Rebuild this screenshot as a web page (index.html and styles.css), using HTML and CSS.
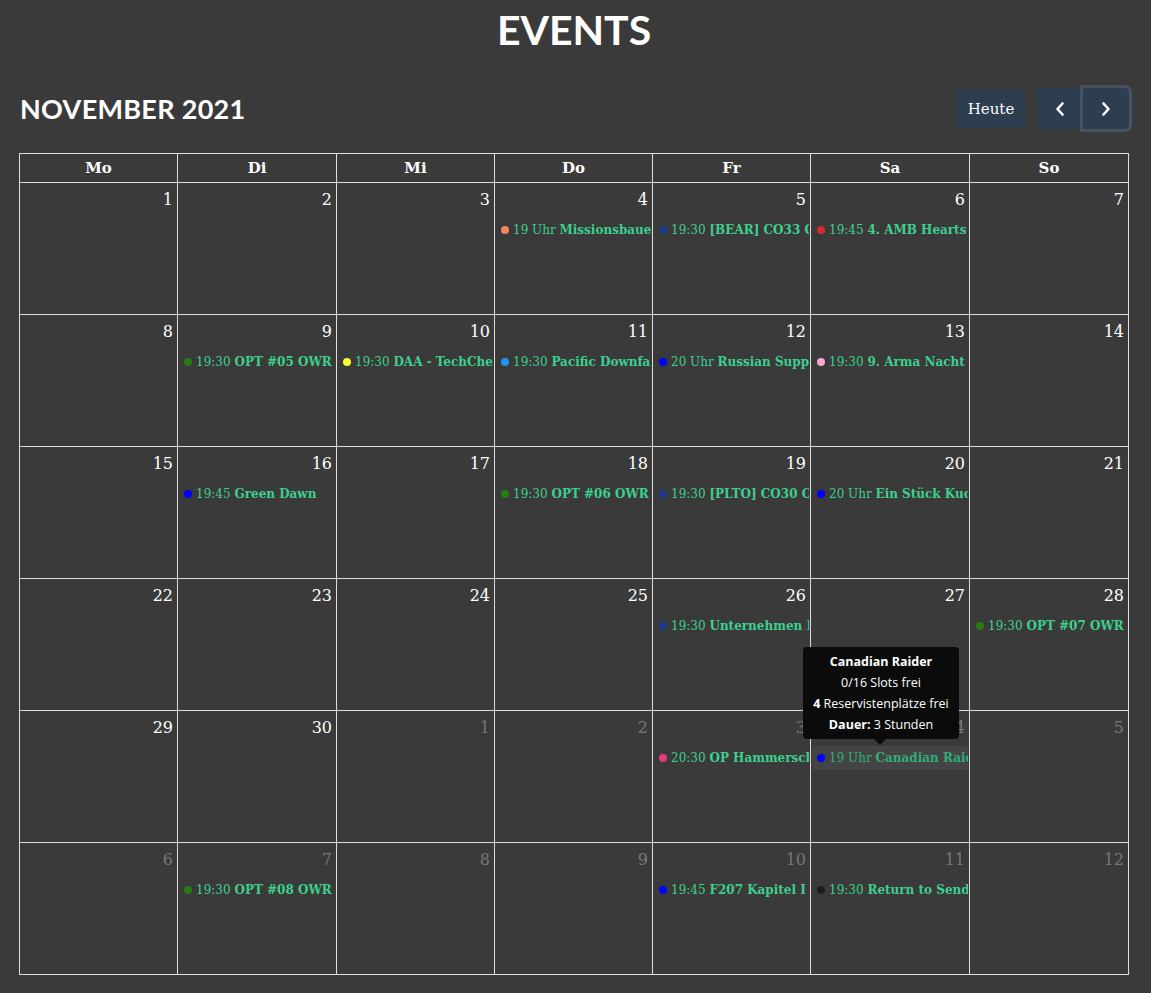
FILE: index.html
```html
<!DOCTYPE html>
<html lang="de">
<head>
<meta charset="utf-8">
<title>Events</title>
<link rel="stylesheet" href="styles.css">
</head>
<body>
<div class="page">
  <h1 class="page-title">EVENTS</h1>
  <div class="toolbar">
    <h2 class="month-title">NOVEMBER 2021</h2>
    <div class="actions">
      <button class="btn btn-today">Heute</button>
      <div class="btn-group">
        <button class="btn btn-nav" aria-label="Zurück"><svg width="12" height="16" viewBox="0 0 12 16"><polyline points="8.5,2.5 3.5,8 8.5,13.5" fill="none" stroke="#fff" stroke-width="2.6" stroke-linecap="round" stroke-linejoin="round"/></svg></button>
        <button class="btn btn-nav focused" aria-label="Weiter"><svg width="12" height="16" viewBox="0 0 12 16"><polyline points="3.5,2.5 8.5,8 3.5,13.5" fill="none" stroke="#fff" stroke-width="2.6" stroke-linecap="round" stroke-linejoin="round"/></svg></button>
      </div>
    </div>
  </div>

  <div class="calendar">
    <div class="head">Mo</div><div class="head">Di</div><div class="head">Mi</div><div class="head">Do</div><div class="head">Fr</div><div class="head">Sa</div><div class="head">So</div>

    <div class="day"><div class="num">1</div></div>
    <div class="day"><div class="num">2</div></div>
    <div class="day"><div class="num">3</div></div>
    <div class="day"><div class="num">4</div><div class="event"><div class="ev-line"><span class="dot c-coral"></span><span class="time">19 Uhr</span> <b>Missionsbauer Abend</b></div></div></div>
    <div class="day"><div class="num">5</div><div class="event"><div class="ev-line"><span class="dot c-navy"></span><span class="time">19:30</span> <b>[BEAR] CO33 Operation</b></div></div></div>
    <div class="day"><div class="num">6</div><div class="event"><div class="ev-line"><span class="dot c-red"></span><span class="time">19:45</span> <b>4. AMB Hearts of Iron</b></div></div></div>
    <div class="day"><div class="num">7</div></div>

    <div class="day"><div class="num">8</div></div>
    <div class="day"><div class="num">9</div><div class="event"><div class="ev-line"><span class="dot c-green"></span><span class="time">19:30</span> <b>OPT #05 OWR</b></div></div></div>
    <div class="day"><div class="num">10</div><div class="event"><div class="ev-line"><span class="dot c-yellow"></span><span class="time">19:30</span> <b>DAA - TechCheck</b></div></div></div>
    <div class="day"><div class="num">11</div><div class="event"><div class="ev-line"><span class="dot c-sky"></span><span class="time">19:30</span> <b>Pacific Downfall</b></div></div></div>
    <div class="day"><div class="num">12</div><div class="event"><div class="ev-line"><span class="dot c-blue"></span><span class="time">20 Uhr</span> <b>Russian Suppression</b></div></div></div>
    <div class="day"><div class="num">13</div><div class="event"><div class="ev-line"><span class="dot c-pink"></span><span class="time">19:30</span> <b>9. Arma Nacht - Special</b></div></div></div>
    <div class="day"><div class="num">14</div></div>

    <div class="day"><div class="num">15</div></div>
    <div class="day"><div class="num">16</div><div class="event"><div class="ev-line"><span class="dot c-blue"></span><span class="time">19:45</span> <b>Green Dawn</b></div></div></div>
    <div class="day"><div class="num">17</div></div>
    <div class="day"><div class="num">18</div><div class="event"><div class="ev-line"><span class="dot c-green"></span><span class="time">19:30</span> <b>OPT #06 OWR</b></div></div></div>
    <div class="day"><div class="num">19</div><div class="event"><div class="ev-line"><span class="dot c-navy"></span><span class="time">19:30</span> <b>[PLTO] CO30 Operation</b></div></div></div>
    <div class="day"><div class="num">20</div><div class="event"><div class="ev-line"><span class="dot c-blue"></span><span class="time">20 Uhr</span> <b>Ein Stück Kuchen</b></div></div></div>
    <div class="day"><div class="num">21</div></div>

    <div class="day"><div class="num">22</div></div>
    <div class="day"><div class="num">23</div></div>
    <div class="day"><div class="num">24</div></div>
    <div class="day"><div class="num">25</div></div>
    <div class="day"><div class="num">26</div><div class="event"><div class="ev-line"><span class="dot c-navy"></span><span class="time">19:30</span> <b>Unternehmen Barbarossa</b></div></div></div>
    <div class="day"><div class="num">27</div></div>
    <div class="day"><div class="num">28</div><div class="event"><div class="ev-line"><span class="dot c-green"></span><span class="time">19:30</span> <b>OPT #07 OWR</b></div></div></div>

    <div class="day"><div class="num">29</div></div>
    <div class="day"><div class="num">30</div></div>
    <div class="day other"><div class="num">1</div></div>
    <div class="day other"><div class="num">2</div></div>
    <div class="day other"><div class="num">3</div><div class="event"><div class="ev-line"><span class="dot c-rose"></span><span class="time">20:30</span> <b>OP Hammerschlag</b></div></div></div>
    <div class="day other"><div class="num">4</div><div class="event hovered"><div class="ev-line"><span class="dot c-blue"></span><span class="time">19 Uhr</span> <b>Canadian Raider</b></div>
      <div class="tooltip"><strong>Canadian Raider</strong><br>0/16 Slots frei<br><strong>4</strong> Reservistenplätze frei<br><strong>Dauer:</strong> 3 Stunden</div></div></div>
    <div class="day other"><div class="num">5</div></div>

    <div class="day other"><div class="num">6</div></div>
    <div class="day other"><div class="num">7</div><div class="event"><div class="ev-line"><span class="dot c-green"></span><span class="time">19:30</span> <b>OPT #08 OWR</b></div></div></div>
    <div class="day other"><div class="num">8</div></div>
    <div class="day other"><div class="num">9</div></div>
    <div class="day other"><div class="num">10</div><div class="event"><div class="ev-line"><span class="dot c-blue"></span><span class="time">19:45</span> <b>F207 Kapitel I - Start</b></div></div></div>
    <div class="day other"><div class="num">11</div><div class="event"><div class="ev-line"><span class="dot c-black"></span><span class="time">19:30</span> <b>Return to Sender</b></div></div></div>
    <div class="day other"><div class="num">12</div></div>
  </div>
</div>
</body>
</html>
```

FILE: styles.css
```css
* { box-sizing: border-box; }

html, body {
  margin: 0;
  padding: 0;
  background: #3a3a3a;
  color: #fff;
  font-family: "DejaVu Serif", "Liberation Serif", serif;
}

.page {
  padding: 0 22px 0 19px;
}

.page-title {
  margin: 0;
  padding-top: 5px;
  text-align: center;
  font-family: Lato, "Open Sans", sans-serif;
  font-weight: 700;
  font-size: 41px;
  line-height: 1.2;
}

.toolbar {
  margin-top: 33px;
  margin-bottom: 23px;
  height: 43px;
  display: flex;
  align-items: center;
  justify-content: space-between;
}

.month-title {
  margin: 0 0 0 1px;
  font-family: Lato, "Open Sans", sans-serif;
  font-weight: 700;
  font-size: 27px;
  letter-spacing: 0.3px;
}

.actions {
  display: flex;
  align-items: center;
  gap: 12px;
}

.btn {
  border: 1px solid #2c3e50;
  background: #2c3e50;
  color: #fff;
  font-family: "DejaVu Serif", serif;
  font-size: 15px;
  border-radius: 4px;
  cursor: pointer;
}

.btn-today {
  height: 38px;
  width: 68px;
  padding: 0;
}

.btn-group {
  display: flex;
}

.btn-nav {
  width: 46px;
  height: 41px;
  padding: 0;
  display: flex;
  align-items: center;
  justify-content: center;
}

.btn-group .btn-nav:first-child {
  border-top-right-radius: 0;
  border-bottom-right-radius: 0;
}

.btn-group .btn-nav:last-child {
  border-top-left-radius: 0;
  border-bottom-left-radius: 0;
}

.btn-nav.focused {
  box-shadow: 0 0 0 3px rgba(76, 91, 106, 0.75);
  position: relative;
}

.calendar {
  display: grid;
  grid-template-columns: 158px 159px 158px 158px 158px 159px 159px;
  grid-template-rows: 29px repeat(6, 132px);
  border-left: 1px solid #ddd;
  border-top: 1px solid #ddd;
  width: 1110px;
}

.head {
  border-right: 1px solid #ddd;
  border-bottom: 1px solid #ddd;
  text-align: center;
  font-weight: 700;
  font-size: 15px;
  line-height: 28px;
}

.day {
  border-right: 1px solid #ddd;
  border-bottom: 1px solid #ddd;
  min-width: 0;
  position: relative;
}

.num {
  text-align: right;
  padding: 5px 4px 4px;
  line-height: 24px;
  font-size: 16px;
}

.other .num {
  color: #777;
}

.event {
  position: relative;
  margin: 2px 1px 0;
  height: 24px;
  border-radius: 3px;
}

.ev-line {
  height: 24px;
  line-height: 24px;
  padding-left: 5px;
  white-space: nowrap;
  overflow: hidden;
  color: #3ecf8e;
  font-size: 12px;
}

.ev-line b {
  font-weight: 700;
}

.dot {
  display: inline-block;
  vertical-align: middle;
  position: relative;
  top: -1px;
  width: 8px;
  height: 8px;
  border-radius: 50%;
  margin-right: 4px;
}

.event.hovered {
  background: #444;
}

.event.hovered .ev-line {
  color: #2fae78;
}

.c-coral { background: #f7845f; }
.c-navy { background: #1b3a8c; }
.c-red { background: #d42b2b; }
.c-green { background: #267d10; }
.c-yellow { background: #ffff30; }
.c-sky { background: #1f93ef; }
.c-blue { background: #0000ff; }
.c-pink { background: #f7a6c9; }
.c-rose { background: #e23c7c; }
.c-black { background: #1e1e1e; }

.tooltip {
  position: absolute;
  z-index: 5;
  left: -9px;
  bottom: 31px;
  width: 156px;
  padding: 4px 4px;
  background: #0b0b0b;
  color: #fff;
  border-radius: 4px;
  text-align: center;
  font-family: "Open Sans", "Noto Sans", sans-serif;
  font-size: 12.5px;
  line-height: 21px;
  white-space: nowrap;
}

.tooltip strong {
  font-weight: 700;
}

.tooltip::after {
  content: "";
  position: absolute;
  left: 71px;
  top: 100%;
  border-left: 6px solid transparent;
  border-right: 6px solid transparent;
  border-top: 6px solid #0b0b0b;
}
```
